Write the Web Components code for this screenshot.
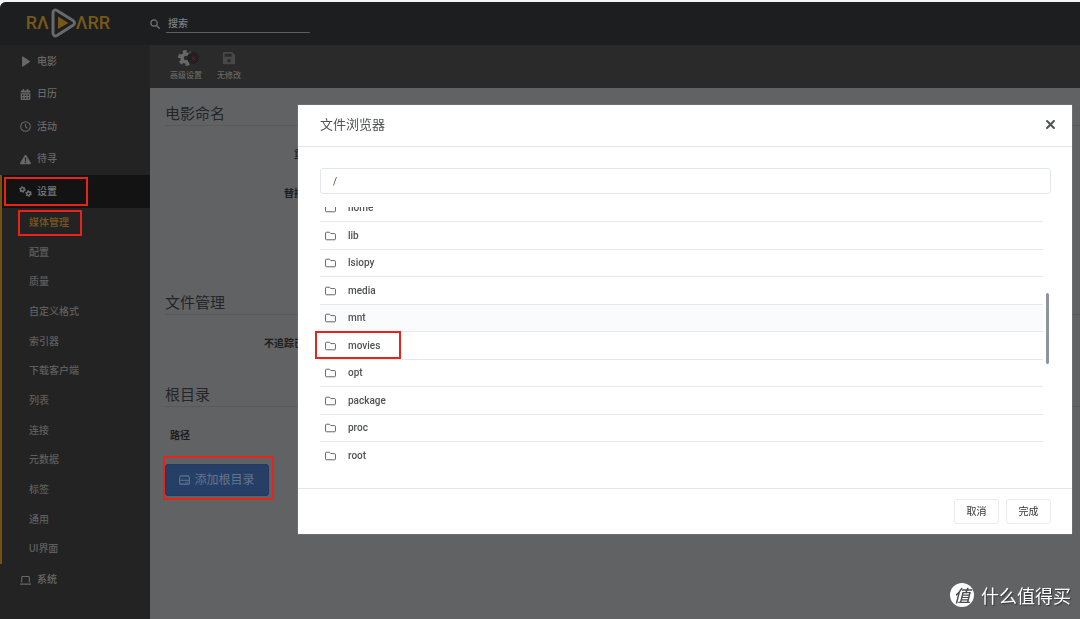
<!DOCTYPE html>
<html lang="zh-CN">
<head>
<meta charset="utf-8">
<meta name="viewport" content="width=device-width, initial-scale=1">
<title>Radarr</title>
<style>
body{margin:0;background:#f3f5f5;font:10px/16px Roboto,"Noto Sans CJK SC",sans-serif}
</style>
</head>
<body>
<radarr-app></radarr-app>
<script>
const ICONS = {
  play:'<path d="M3 1.6v12.8c0 .8.8 1.2 1.500.8l9.700-6.300c.6-.4.6-1.300 0-1.700L4.500.9C3.800.4 3 .8 3 1.600z" fill="currentColor"/>',
  calendar:'<path fill="currentColor" fill-rule="evenodd" d="M4 0h2v2h4V0h2v2h1.500C14.300 2 15 2.700 15 3.500V5H1V3.500C1 2.700 1.700 2 2.500 2H4zM1 6h14v8.500c0 .8-.7 1.500-1.500 1.500h-11C1.700 16 1 15.300 1 14.500zM3 8v2h2V8zm4 0v2h2V8zm4 0v2h2V8zM3 12v2h2v-2zm4 0v2h2v-2zm4 0v2h2v-2z"/>',
  clock:'<g fill="none" stroke="currentColor" stroke-width="1.500"><circle cx="8" cy="8" r="7"/><path d="M8 3.500V8.500l3 2"/></g>',
  warning:'<path fill="currentColor" fill-rule="evenodd" d="M8 1c.5 0 .9.300 1.200.7l6.500 11.200c.5.9-.1 2.100-1.200 2.100h-13c-1.100 0-1.700-1.200-1.200-2.100L6.800 1.700C7.100 1.300 7.500 1 8 1zM7 5l.3 5h1.400L9 5zm1 6a1.200 1.200 0 1 0 0 2.400A1.200 1.200 0 0 0 8 11z"/>',
  cogs:'<g fill="none" stroke="currentColor"><circle cx="5" cy="5" r="2.700" stroke-width="2"/><circle cx="5" cy="5" r="4.300" stroke-width="1.400" stroke-dasharray="2 2.500"/><circle cx="14" cy="11" r="2.700" stroke-width="2"/><circle cx="14" cy="11" r="4.300" stroke-width="1.400" stroke-dasharray="2 2.500"/></g>',
  laptop:'<path fill="none" stroke="currentColor" stroke-width="1.600" d="M2.500 11V3.200c0-.6.4-1 1-1h9c.6 0 1 .4 1 1V11M0 13.200h16"/>',
  search:'<path fill="none" stroke="currentColor" stroke-width="2" stroke-linecap="round" d="M6.500 1.500a5 5 0 1 1 0 10 5 5 0 0 1 0-10zM10.300 10.300l4.500 4.500"/>',
  cog:'<circle cx="8" cy="8" r="4" fill="none" stroke="currentColor" stroke-width="3.600"/><circle cx="8" cy="8" r="6.600" fill="none" stroke="currentColor" stroke-width="2.600" stroke-dasharray="3.900 3"/>',
  save:'<path fill="currentColor" fill-rule="evenodd" d="M2 1h9.500L15 4.500V13.500c0 .8-.7 1.500-1.500 1.500h-11C1.700 15 1 14.300 1 13.500v-11C1 1.700 1.700 1 2.500 1zM3 3v3.500h8V3zm5 6a2 2 0 1 0 0 4 2 2 0 0 0 0-4z"/>',
  drive:'<path fill="none" stroke="currentColor" stroke-width="1.500" stroke-linejoin="round" d="M2.500 2h11l1.500 2v9c0 .6-.4 1-1 1H2c-.6 0-1-.4-1-1V4zM1 8.500h14M9.500 11.300h1.500m1 0h1.500"/>',
  folder:'<path fill="none" stroke="currentColor" stroke-width="1.400" stroke-linejoin="round" d="M2 2.500h4.500L8.500 4.500H14c.7 0 1.200.5 1.200 1.200V12.300c0 .7-.5 1.200-1.200 1.200H2c-.7 0-1.200-.5-1.200-1.200V3.700c0-.7.5-1.200 1.200-1.200z"/>',
  close:'<path fill="none" stroke="currentColor" stroke-width="3" stroke-linecap="round" d="M3 3l10 10M13 3L3 13"/>'
};
const WIDE = {cogs:'0 0 19 16'};

function define(name, markup, ready) {
  const template = document.createElement('template');
  template.innerHTML = '<style>*{box-sizing:border-box}a{color:inherit;text-decoration:none}button,input{font:inherit;color:inherit}</style>' + markup;
  customElements.define(name, class extends HTMLElement {
    connectedCallback() {
      if (this.shadowRoot) return;
      this.attachShadow({mode:'open'}).append(template.content.cloneNode(true));
      if (ready) ready(this, this.shadowRoot);
    }
  });
}

define('ui-icon', '<style>:host{display:block;width:12px;height:12px;flex:none}svg{display:block;width:100%;height:100%}</style><svg aria-hidden="true"></svg>', (host, root) => {
  const svg = root.querySelector('svg'), name = host.getAttribute('name');
  if (!name) return;
  svg.setAttribute('viewBox', WIDE[name] || '0 0 16 16');
  svg.innerHTML = ICONS[name];
});

define('red-frame', '<style>:host{position:absolute;inset:0;border:2px solid #e8231a;pointer-events:none;z-index:1}</style>');

define('radarr-logo', `<style>
:host{display:block}
a{display:flex;align-items:center;justify-content:center;color:#765818;font:500 18px/30px Roboto,sans-serif}
svg{width:27px;height:30px;margin:0 -1px 0 1px;flex:none}
</style>
<a href="#" aria-label="Radarr"><span>RΛ</span><svg viewBox="0 0 27 30" aria-hidden="true"><path d="M3 5c0-3 2-3.500 4-2.500L23 12.500c2 1.300 2 3.500 0 4.800L7 27.500c-2 1-4 .3-4-2.500z" fill="none" stroke="#68696c" stroke-width="3"/><path d="M8 8.500l10.500 6.500L8 21z" fill="#765818"/></svg><span>ΛRR</span></a>`);

define('app-header', `<style>
:host{display:flex;height:43px;background:#1c1e20;color:#737475}
radarr-logo{width:136px;padding:6px 0}
form{display:flex;align-items:center;margin-left:14px;gap:6px;height:43px}
input{width:144px;height:19px;padding:0 2px;border:0;border-bottom:1px solid #5c5d5e;background:none;outline:0;font-weight:500}
input::placeholder{color:#7e7f80;opacity:1}
ui-icon{width:10px;height:10px}
</style>
<radarr-logo></radarr-logo>
<form role="search"><ui-icon name="search"></ui-icon><input type="search" aria-label="搜索" placeholder="搜索"></form>`);

define('nav-item', `<style>
:host{display:block}
a{position:relative;display:flex;align-items:center;gap:6px;height:33px;padding-left:20px;color:#686868;font-weight:500}
:host(:nth-child(even)) a{height:32px}
:host([active]){box-shadow:inset 2px 0 #735313}
:host([active]) a{margin-left:2px;padding-left:18px;background:#131313;color:#787878}
ui-icon{width:11px;height:11px}
:host([active]) ui-icon{width:13px;margin:0 -1px}
red-frame{display:none}
:host([active]) red-frame{display:block;inset:2px auto 2px 2px;width:84px}
</style>
<a href="#"><ui-icon></ui-icon><slot></slot><red-frame></red-frame></a><slot name="children"></slot>`, (host, root) => {
  const icon = document.createElement('ui-icon');
  icon.setAttribute('name', host.getAttribute('icon'));
  root.querySelector('ui-icon').replaceWith(icon);
});

define('nav-child', `<style>
:host{display:block;color:#5e5e5e;font-weight:500}
a{position:relative;display:flex;align-items:center;height:30px;padding-left:29px}
:host(:nth-child(3n+2)) a{height:29px}
:host([active]){color:#78591b}
red-frame{display:none}
:host([active]) red-frame{display:block;inset:2px auto 2px 18px;width:64px}
</style><a href="#"><slot></slot><red-frame></red-frame></a>`);

define('side-nav', `<style>:host{display:block;width:150px;flex:none;background:#232323}</style>
<nav aria-label="主菜单">
<nav-item icon="play">电影</nav-item>
<nav-item icon="calendar">日历</nav-item>
<nav-item icon="clock">活动</nav-item>
<nav-item icon="warning">待寻</nav-item>
<nav-item icon="cogs" active>设置
<div slot="children">
<nav-child active>媒体管理</nav-child><nav-child>配置</nav-child><nav-child>质量</nav-child><nav-child>自定义格式</nav-child><nav-child>索引器</nav-child><nav-child>下载客户端</nav-child><nav-child>列表</nav-child><nav-child>连接</nav-child><nav-child>元数据</nav-child><nav-child>标签</nav-child><nav-child>通用</nav-child><nav-child>UI界面</nav-child>
</div></nav-item>
<nav-item icon="laptop">系统</nav-item>
</nav>`);

define('page-toolbar', `<style>
:host{display:flex;gap:4px;height:43px;padding-left:14px;background:#2a2a2a;color:#686868}
button{display:flex;flex-direction:column;align-items:center;width:44px;padding:5px 0 0;border:0;background:none;font-size:8px;font-weight:500;line-height:18px;white-space:nowrap}
button+button{width:34px;color:#484848}
.label{color:#666}
.icon{position:relative;height:17px}
ui-icon{width:16px;height:16px}
button+button ui-icon{width:14px;height:16px}
.badge{position:absolute;left:9px;top:2px;display:grid;place-items:center;width:12px;height:12px;border-radius:50%;background:#202020;color:#7c1c24}
.badge ui-icon{width:5px;height:5px}
</style>
<button type="button"><span class="icon"><ui-icon name="cog"></ui-icon><span class="badge"><ui-icon name="close"></ui-icon></span></span><span class="label">高级设置</span></button>
<button type="button"><span class="icon"><ui-icon name="save"></ui-icon></span><span class="label">无修改</span></button>`);

define('field-set', `<style>
:host{display:block}
fieldset{margin:0;padding:0;border:0;min-width:0}
legend{display:block;width:100%;height:22px;padding:0;border-bottom:1px solid #58595b;font-size:15px;line-height:20px;color:#242527}
</style><fieldset><legend><slot name="legend"></slot></legend><slot></slot></fieldset>`);

define('settings-page', `<style>
:host{display:block;padding:16px 0 16px 15px;color:#1c1d1e}
field-set{height:189px}
field-set.files{height:92px}
.row{display:block;width:179px;font-weight:700;text-align:right;margin-top:21px}
.row+.row{margin-top:23px}
table{width:100%;border-collapse:collapse;margin-top:21px}
th{padding:0 5px;text-align:left;font-weight:700}
.add{position:relative;display:inline-block;margin-top:20px}
.add button{display:flex;align-items:center;justify-content:center;gap:4px;width:104px;height:32px;padding:0;border:1px solid #243b5f;border-radius:3px;background:#263f66;color:#65758c;font-size:12px;white-space:nowrap}
.add ui-icon{width:11px}
red-frame{inset:-8px -5px -4px -2px}
</style>
<field-set><span slot="legend">电影命名</span><span class="row">重命名电影</span><span class="row">替换非法字符</span></field-set>
<field-set class="files"><span slot="legend">文件管理</span><span class="row">不追踪已删除电影</span></field-set>
<field-set><span slot="legend">根目录</span>
<table><thead><tr><th scope="col">路径</th></tr></thead></table>
<div class="add"><button type="button"><ui-icon name="drive"></ui-icon>添加根目录</button><red-frame></red-frame></div></field-set>`);

define('file-browser', `<style>
:host{display:block;background:#fff;color:#515253;box-shadow:0 0 1px #aaa}
header{display:flex;align-items:center;justify-content:space-between;height:42px;padding:0 15px 2px 22px;border-bottom:1px solid #e5e5e5}
h2{margin:0;font-size:13px;line-height:20px;font-weight:400}
header button{display:grid;place-items:center;width:14px;height:14px;padding:0;border:0;background:none}
header ui-icon{width:11px;height:11px}
.body{padding:21px 21px 18px 22px}
.path{display:block;width:100%;height:26px;padding:0 12px;border:1px solid #e3e7e9;border-radius:3px;background:#fff;outline:0}
.list{position:relative;margin:13px 0 0 -6px}
.scroller{height:263px;overflow-y:auto;scrollbar-width:none;padding:0 8px 0 6px}
table{width:100%;border-collapse:separate;border-spacing:0}
td{height:28px;padding:0;border-bottom:1px solid #e8e8e8}
tr:nth-child(odd) td{height:27px}
tr:last-child td{border-bottom-color:#fff}
tr.hover td{background:#fafbfc}
td:first-child{width:28px;padding-left:5px}
td:first-child ui-icon{width:11px;color:#606164}
a{display:block;position:relative;font-weight:500}
.thumb{position:absolute;right:2px;top:86px;width:3px;height:71px;border-radius:2px;background:#8f949b}
red-frame{inset:-7px auto -5px -33px;width:86px}
footer{display:flex;justify-content:flex-end;gap:7px;padding:10px 21px;border-top:1px solid #e5e5e5}
footer button{width:45px;height:25px;padding:0;border:1px solid #eaeaea;border-radius:3px;background:#fff;color:#333}
</style>
<header><h2>文件浏览器</h2><button type="button" aria-label="关闭"><ui-icon name="close"></ui-icon></button></header>
<div class="body"><input class="path" aria-label="路径" value="/">
<div class="list"><div class="scroller"><table aria-label="文件夹"><tbody></tbody></table></div><span class="thumb"></span></div></div>
<footer><button type="button">取消</button><button type="button">完成</button></footer>`, (host, root) => {
  root.querySelector('tbody').innerHTML = ['home','lib','lsiopy','media','mnt','movies','opt','package','proc','root'].map(name =>
    `<tr${name === 'mnt' ? ' class="hover"' : ''}><td><ui-icon name="folder"></ui-icon></td><td><a href="#">${name}${name === 'movies' ? '<red-frame></red-frame>' : ''}</a></td></tr>`).join('');
  const scroller = root.querySelector('.scroller');
  scroller.scrollTop = scroller.scrollHeight;
});

define('corner-brand', `<style>
:host{display:flex;align-items:center;gap:7px;color:#fff;font:18px/24px "Noto Sans CJK SC",sans-serif;text-shadow:1px 1px 1px #333}
.mark{display:grid;place-items:center;width:24px;height:24px;border-radius:50%;background:#fff;color:#4c4d4f;font-size:17px;font-style:italic;font-weight:500;text-shadow:none}
</style><span class="mark">值</span><span>什么值得买</span>`);

define('radarr-app', `<style>
:host{display:flex;flex-direction:column;min-height:calc(100vh - 2px);margin-top:2px;border-radius:6px 0 0 0;overflow:hidden;background:#616264}
.columns{display:flex;flex:1}
main{flex:1;min-width:0}
.overlay{position:fixed;inset:0;padding:105px 8px 0 298px}
corner-brand{position:fixed;right:9px;bottom:12px}
</style>
<app-header></app-header>
<div class="columns"><side-nav></side-nav><main><page-toolbar></page-toolbar><settings-page></settings-page></main></div>
<div class="overlay"><file-browser role="dialog" aria-label="文件浏览器"></file-browser></div>
<corner-brand></corner-brand>`);
</script>
</body>
</html>
